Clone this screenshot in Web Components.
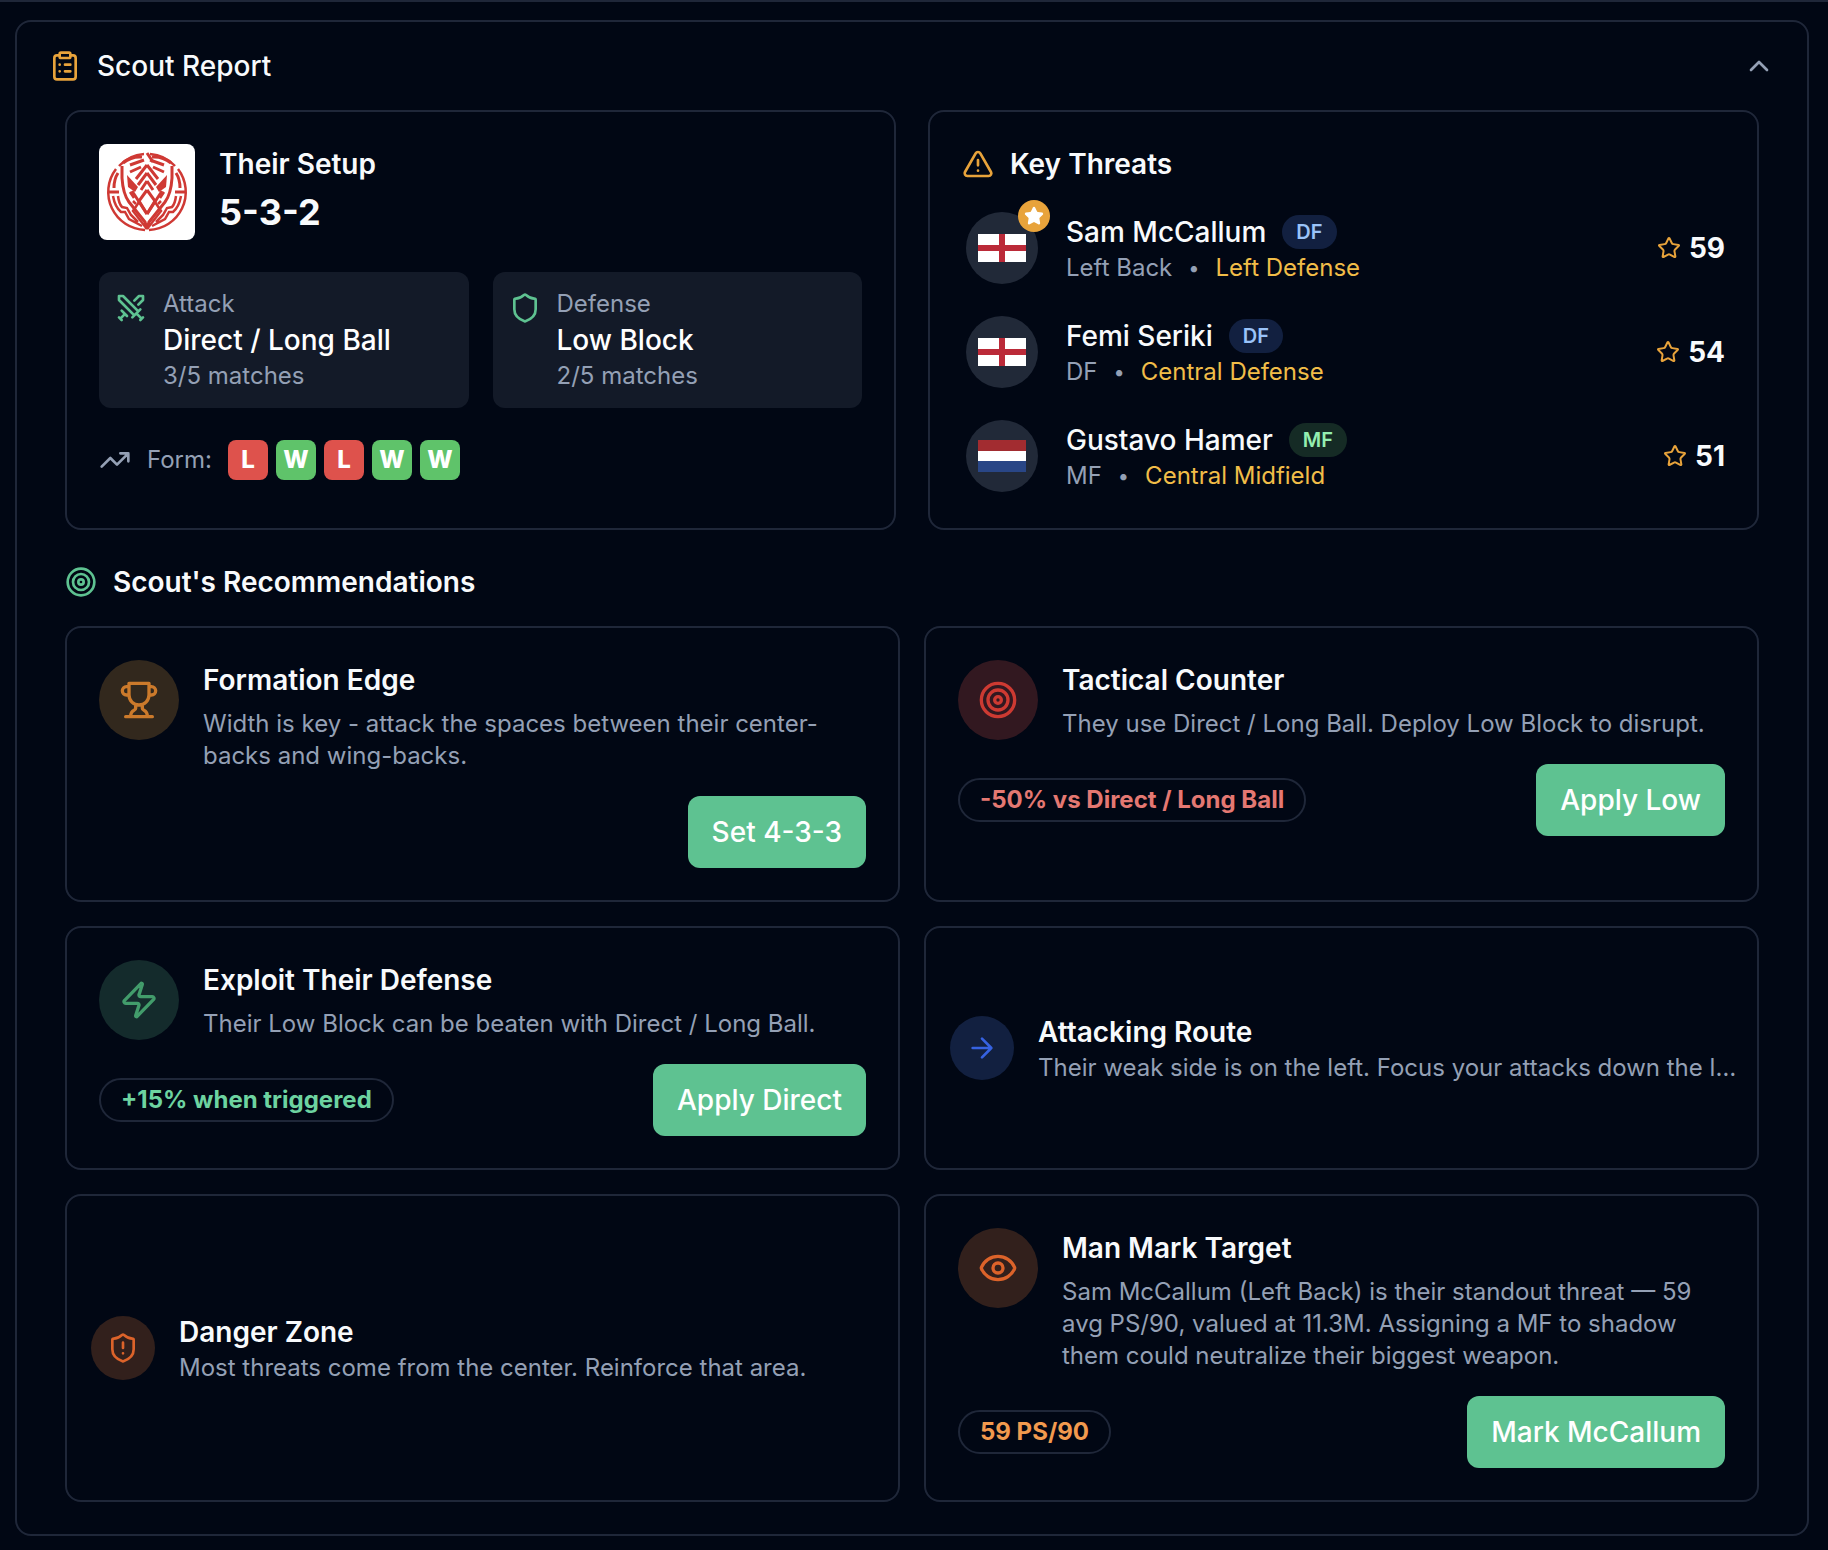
<!DOCTYPE html>
<html lang="en">
<head>
<meta charset="utf-8">
<meta name="viewport" content="width=device-width, initial-scale=1">
<title>Scout Report</title>
<style>
  :root {
    --bg: #010714;
    --line: #1f2739;
    --panel: #131a28;
    --text: #f8fafc;
    --muted: #94a0b5;
    --green: #5ec291;
    --amber: #e8a33b;
    --yellow: #f1bd48;
  }
  body {
    margin: 0;
    min-height: 100vh;
    box-sizing: border-box;
    border-top: 2px solid var(--line);
    background: var(--bg);
    color: var(--text);
    font-family: Inter, "Liberation Sans", sans-serif;
    font-size: 28px;
    line-height: 40px;
  }
  main {
    padding: 18px 19px 14px 15px;
  }
</style>
</head>
<body>
<main>
  <scout-report heading="Scout Report">
    <card-grid gap="wide">
      <setup-card heading="Their Setup" formation="5-3-2">
        <team-crest slot="crest"></team-crest>
        <style-stat slot="stats" icon="swords" label="Attack" value="Direct / Long Ball" note="3/5 matches"></style-stat>
        <style-stat slot="stats" icon="shield" label="Defense" value="Low Block" note="2/5 matches"></style-stat>
        <form-guide slot="form" results="LWLWW"></form-guide>
      </setup-card>
      <threats-card heading="Key Threats">
        <threat-row name="Sam McCallum" tag="DF" role="Left Back" area="Left Defense" score="59" flag="england" top></threat-row>
        <threat-row name="Femi Seriki" tag="DF" role="DF" area="Central Defense" score="54" flag="england"></threat-row>
        <threat-row name="Gustavo Hamer" tag="MF" role="MF" area="Central Midfield" score="51" flag="netherlands"></threat-row>
      </threats-card>
    </card-grid>

    <section-title icon="target">Scout's Recommendations</section-title>

    <card-grid>
      <rec-card icon="trophy" tone="amber" heading="Formation Edge" action="Set 4-3-3">Width is key - attack the spaces between their center-backs and wing-backs.</rec-card>
      <rec-card icon="target" tone="red" heading="Tactical Counter" effect="-50% vs Direct / Long Ball" action="Apply Low">They use Direct / Long Ball. Deploy Low Block to disrupt.</rec-card>
      <rec-card icon="zap" tone="green" heading="Exploit Their Defense" effect="+15% when triggered" action="Apply Direct">Their Low Block can be beaten with Direct / Long Ball.</rec-card>
      <tip-card icon="arrow" tone="blue" heading="Attacking Route">Their weak side is on the left. Focus your attacks down the left flank.</tip-card>
      <tip-card icon="shieldAlert" tone="orange" heading="Danger Zone">Most threats come from the center. Reinforce that area.</tip-card>
      <rec-card icon="eye" tone="orange" heading="Man Mark Target" effect="59 PS/90" action="Mark McCallum">Sam McCallum (Left Back) is their standout threat — 59 avg PS/90, valued at 11.3M. Assigning a MF to shadow them could neutralize their biggest weapon.</rec-card>
    </card-grid>
  </scout-report>
</main>

<script>
const ICONS = {
  clipboard: '<rect width="8" height="4" x="8" y="2" rx="1"/><path d="M16 4h2a2 2 0 0 1 2 2v14a2 2 0 0 1-2 2H6a2 2 0 0 1-2-2V6a2 2 0 0 1 2-2h2M12 11h4M12 16h4M8 11h.01M8 16h.01"/>',
  chevron: '<path d="m18 15-6-6-6 6"/>',
  swords: '<path d="M14.5 17.5 3 6V3h3l11.5 11.5M13 19l6-6M16 16l4 4M19 21l2-2M14.5 6.5 18 3h3v3l-3.5 3.5M5 14l4 4M7 17l-3 3M3 19l2 2"/>',
  shield: '<path d="M20 13c0 5-3.5 7.5-7.66 8.95a1 1 0 0 1-.67-.01C7.5 20.5 4 18 4 13V6a1 1 0 0 1 1-1c2 0 4.5-1.2 6.24-2.72a1.17 1.17 0 0 1 1.52 0C14.51 3.81 17 5 19 5a1 1 0 0 1 1 1z"/>',
  shieldAlert: '<path d="M20 13c0 5-3.5 7.5-7.66 8.95a1 1 0 0 1-.67-.01C7.5 20.5 4 18 4 13V6a1 1 0 0 1 1-1c2 0 4.5-1.2 6.24-2.72a1.17 1.17 0 0 1 1.52 0C14.51 3.81 17 5 19 5a1 1 0 0 1 1 1zM12 8v4M12 16h.01"/>',
  trend: '<path d="m22 7-8.5 8.5-5-5L2 17M16 7h6v6"/>',
  alert: '<path d="m21.73 18-8-14a2 2 0 0 0-3.48 0l-8 14A2 2 0 0 0 4 21h16a2 2 0 0 0 1.73-3M12 9v4M12 17h.01"/>',
  star: '<path d="M11.525 2.295a.53.53 0 0 1 .95 0l2.31 4.679a2.123 2.123 0 0 0 1.595 1.16l5.166.756a.53.53 0 0 1 .294.904l-3.736 3.638a2.123 2.123 0 0 0-.611 1.878l.882 5.14a.53.53 0 0 1-.771.56l-4.618-2.428a2.122 2.122 0 0 0-1.973 0L6.396 21.01a.53.53 0 0 1-.77-.56l.881-5.139a2.122 2.122 0 0 0-.611-1.879L2.16 9.795a.53.53 0 0 1 .294-.906l5.165-.755a2.122 2.122 0 0 0 1.597-1.16z"/>',
  target: '<circle cx="12" cy="12" r="10"/><circle cx="12" cy="12" r="6"/><circle cx="12" cy="12" r="2"/>',
  trophy: '<path d="M6 9H4.500a2.500 2.500 0 0 1 0-5H6M18 9h1.500a2.500 2.500 0 0 0 0-5H18M4 22h16M10 14.660V17c0 .55-.47.98-.97 1.210C7.850 18.750 7 20.240 7 22M14 14.660V17c0 .55.47.98.97 1.210C16.150 18.750 17 20.240 17 22M18 2H6v7a6 6 0 0 0 12 0z"/>',
  zap: '<path d="M4 14a1 1 0 0 1-.78-1.630l9.900-10.200a.5.5 0 0 1 .86.46l-1.920 6.020A1 1 0 0 0 13 10h7a1 1 0 0 1 .78 1.630l-9.900 10.200a.5.5 0 0 1-.86-.46l1.920-6.020A1 1 0 0 0 11 14z"/>',
  arrow: '<path d="M5 12h14M12 5l7 7-7 7"/>',
  eye: '<path d="M2.062 12.348a1 1 0 0 1 0-.696 10.750 10.750 0 0 1 19.876 0 1 1 0 0 1 0 .696 10.750 10.750 0 0 1-19.876 0"/><circle cx="12" cy="12" r="3"/>'
};

const FLAGS = {
  england: '<svg width="48" height="28" viewBox="0 0 48 28" role="img" aria-label="England"><path fill="#fff" d="M0 0h48v28H0z"/><path fill="#bb2a38" d="M21 0h6v28h-6zM0 11h48v6H0z"/></svg>',
  netherlands: '<svg width="48" height="32" viewBox="0 0 48 32" role="img" aria-label="Netherlands"><path fill="#fff" d="M0 0h48v32H0z"/><path fill="#a22c30" d="M0 0h48v11H0z"/><path fill="#294686" d="M0 21h48v11H0z"/></svg>'
};

const TONES = {
  amber: { disc: '#32281d', icon: '#cc7a2b', label: '#f1bd48' },
  red: { disc: '#321820', icon: '#cd3a32', label: '#e47872' },
  green: { disc: '#142b2c', icon: '#429c6b', label: '#6dd3a0' },
  blue: { disc: '#122040', icon: '#3662e0', label: '#9ac3f9' },
  orange: { disc: '#32201c', icon: '#dc632a', label: '#f29a4e' }
};

const CARD = `
  :host {
    display: block;
    box-sizing: border-box;
    min-width: 0;
    border: 2px solid var(--line);
    border-radius: 16px;
  }
  h3, p { margin: 0; }
  h3 { font-size: 28px; line-height: 40px; font-weight: 600; }
  p { font-size: 24px; line-height: 32px; color: var(--muted); }
`;

// Small base class: subclasses only return their markup
class BaseElement extends HTMLElement {
  constructor() {
    super();
    this.attachShadow({ mode: 'open' });
  }

  connectedCallback() {
    this.shadowRoot.innerHTML = this.template();
  }

  attr(name) {
    return this.getAttribute(name) || '';
  }
}

class UiIcon extends BaseElement {
  template() {
    const size = this.attr('size') || 32;
    const fill = this.hasAttribute('filled') ? 'currentColor' : 'none';
    return `
      <style>
        :host { display: block; flex: none; width: ${size}px; height: ${size}px; }
        svg { display: block; }
      </style>
      <svg width="${size}" height="${size}" viewBox="0 0 24 24" fill="${fill}" stroke="currentColor"
        stroke-width="2" stroke-linecap="round" stroke-linejoin="round" aria-hidden="true">${ICONS[this.attr('name')]}</svg>
    `;
  }
}

class ScoutReport extends BaseElement {
  template() {
    return `
      <style>
        :host {
          display: block;
          border: 2px solid var(--line);
          border-radius: 16px;
        }
        h2 { margin: 0; }
        button {
          display: flex;
          align-items: center;
          gap: 16px;
          width: 100%;
          padding: 24px 32px;
          border: 0;
          background: none;
          color: var(--text);
          font: inherit;
          font-size: 28px;
          line-height: 40px;
          font-weight: 500;
          text-align: left;
          cursor: pointer;
        }
        .label { flex: 1; }
        .lead { color: var(--amber); }
        .toggle { color: var(--muted); }
        .closed .toggle { transform: rotate(180deg); }
        .body {
          display: flex;
          flex-direction: column;
          padding: 0 48px 32px;
        }
        .body[hidden] { display: none; }
      </style>
      <h2>
        <button type="button" aria-expanded="true">
          <ui-icon class="lead" name="clipboard"></ui-icon>
          <span class="label">${this.attr('heading')}</span>
          <ui-icon class="toggle" name="chevron"></ui-icon>
        </button>
      </h2>
      <div class="body"><slot></slot></div>
    `;
  }

  connectedCallback() {
    super.connectedCallback();
    const button = this.shadowRoot.querySelector('button');
    const body = this.shadowRoot.querySelector('.body');
    button.addEventListener('click', () => {
      body.hidden = !body.hidden;
      button.classList.toggle('closed', body.hidden);
      button.setAttribute('aria-expanded', String(!body.hidden));
    });
  }
}

class CardGrid extends BaseElement {
  template() {
    return `
      <style>
        :host {
          display: grid;
          grid-template-columns: repeat(2, minmax(0, 1fr));
          gap: ${this.attr('gap') === 'wide' ? 32 : 24}px;
        }
        @media (max-width: 1100px) {
          :host { grid-template-columns: minmax(0, 1fr); }
        }
      </style>
      <slot></slot>
    `;
  }
}

class SectionTitle extends BaseElement {
  template() {
    return `
      <style>
        :host { display: block; padding: 32px 0 24px; }
        h3 {
          display: flex;
          align-items: center;
          gap: 16px;
          margin: 0;
          font-size: 28px;
          line-height: 40px;
          font-weight: 600;
        }
        ui-icon { color: var(--green); }
      </style>
      <h3><ui-icon name="${this.attr('icon')}"></ui-icon><span><slot></slot></span></h3>
    `;
  }
}

class TeamCrest extends BaseElement {
  template() {
    // left half of the emblem, mirrored for the right one
    const half = `
      <path d="M45 10A38 38 0 0 0 20 22M17 25A38 38 0 0 0 46 86"/>
      <path d="M9 48h11M15 44Q15 35 19 29" stroke-width="3"/>
      <path d="M14 52Q16 63 22 68L26 68L30 75L43 82M19 52Q20 60 23 63L28 64L32 71L39 78"/>
      <path d="M23 22V34Q24 50 30 58L46 78L48 85" stroke-width="3"/>
      <path d="M33 47L48 70" stroke-width="3"/>
      <path d="M40 58L34 67L48 85"/>
      <path d="M24 19Q33 12 43 13M31 21L45 16" stroke-width="3"/>
      <path d="M31 28L42 23M37 35L48 21M39 41L48 29M42 46L48 37" stroke-width="3"/>
      <path d="M48 46L40 57L48 70" stroke-width="3"/>
      <path d="M28 31L39 43L36 48L29 43z" fill="#cf3934" stroke="none"/>
      <path d="M31 48L35 54M34 57L37 60"/>
    `;
    return `
      <style>
        :host { display: block; flex: none; width: 96px; height: 96px; }
        svg { display: block; }
      </style>
      <svg width="96" height="96" viewBox="0 0 96 96" role="img" aria-label="Team crest">
        <rect width="96" height="96" rx="8" fill="#fff"/>
        <g fill="none" stroke="#cf3934" stroke-width="2.500">
          <g>${half}</g>
          <g transform="matrix(-1 0 0 1 96 0)">${half}</g>
          <path d="M48 9L54 18" stroke-width="3"/>
        </g>
      </svg>
    `;
  }
}

class SetupCard extends BaseElement {
  template() {
    return `
      <style>
        ${CARD}
        :host { padding: 32px; }
        header { display: flex; gap: 24px; }
        .formation {
          color: var(--text);
          font-size: 36px;
          line-height: 56px;
          font-weight: 700;
        }
        .stats {
          display: grid;
          grid-template-columns: repeat(2, minmax(0, 1fr));
          gap: 24px;
          margin: 32px 0;
        }
      </style>
      <header>
        <slot name="crest"></slot>
        <div>
          <h3>${this.attr('heading')}</h3>
          <p class="formation">${this.attr('formation')}</p>
        </div>
      </header>
      <div class="stats"><slot name="stats"></slot></div>
      <slot name="form"></slot>
    `;
  }
}

class StyleStat extends BaseElement {
  template() {
    return `
      <style>
        :host {
          display: flex;
          gap: 16px;
          padding: 16px;
          border-radius: 12px;
          background: var(--panel);
          color: var(--muted);
          font-size: 24px;
          line-height: 32px;
        }
        ui-icon { margin-top: 4px; color: var(--green); }
        .value {
          color: #fff;
          font-size: 28px;
          line-height: 40px;
          font-weight: 500;
        }
      </style>
      <ui-icon name="${this.attr('icon')}"></ui-icon>
      <div>
        <div>${this.attr('label')}</div>
        <div class="value">${this.attr('value')}</div>
        <div>${this.attr('note')}</div>
      </div>
    `;
  }
}

class FormGuide extends BaseElement {
  template() {
    return `
      <style>
        :host {
          display: flex;
          align-items: center;
          gap: 16px;
          color: var(--muted);
          font-size: 24px;
          line-height: 32px;
        }
        .results { display: flex; gap: 8px; }
        .results span {
          display: grid;
          place-content: center;
          width: 40px;
          height: 40px;
          border-radius: 8px;
          color: #fff;
          font-weight: 800;
        }
        .W { background: #5fc36a; }
        .L { background: #de524c; }
      </style>
      <ui-icon name="trend"></ui-icon>
      <span>Form:</span>
      <div class="results">
        ${[...this.attr('results')].map(result => `<span class="${result}">${result}</span>`).join('')}
      </div>
    `;
  }
}

class ThreatsCard extends BaseElement {
  template() {
    return `
      <style>
        ${CARD}
        :host { padding: 32px; }
        h3 { display: flex; align-items: center; gap: 16px; }
        ui-icon { color: var(--amber); }
        .rows {
          display: flex;
          flex-direction: column;
          gap: 24px;
          margin-top: 24px;
        }
      </style>
      <h3><ui-icon name="alert"></ui-icon>${this.attr('heading')}</h3>
      <div class="rows"><slot></slot></div>
    `;
  }
}

class ThreatRow extends BaseElement {
  template() {
    const badge = this.hasAttribute('top')
      ? '<span class="badge"><ui-icon name="star" size="20" filled></ui-icon></span>'
      : '';
    return `
      <style>
        :host { display: flex; align-items: center; gap: 24px; }
        .avatar { position: relative; padding: 4px; }
        .disc {
          display: grid;
          place-content: center;
          width: 72px;
          height: 72px;
          border-radius: 50%;
          background: #212938;
        }
        .disc svg { display: block; }
        .badge {
          position: absolute;
          top: -8px;
          right: -8px;
          display: grid;
          place-content: center;
          width: 32px;
          height: 32px;
          border-radius: 50%;
          background: var(--amber);
          color: #fff;
        }
        .info { flex: 1; min-width: 0; }
        .name, .role { display: flex; align-items: center; gap: 16px; }
        .name { font-size: 28px; line-height: 40px; font-weight: 500; }
        .role { font-size: 24px; line-height: 32px; color: var(--muted); }
        .dot { font-size: 20px; }
        .area { color: var(--yellow); }
        .tag {
          padding: 2px 14px;
          border-radius: 20px;
          font-size: 20px;
          line-height: 30px;
          font-weight: 600;
        }
        .DF { background: #122040; color: #9ac3f9; }
        .MF { background: #152b25; color: #94efb0; }
        .score { display: flex; align-items: center; gap: 8px; font-weight: 700; }
        .score ui-icon { color: var(--amber); }
      </style>
      <div class="avatar"><div class="disc">${FLAGS[this.attr('flag')]}</div>${badge}</div>
      <div class="info">
        <div class="name"><span>${this.attr('name')}</span><span class="tag ${this.attr('tag')}">${this.attr('tag')}</span></div>
        <div class="role"><span>${this.attr('role')}</span><span class="dot">•</span><span class="area">${this.attr('area')}</span></div>
      </div>
      <div class="score"><ui-icon name="star" size="24"></ui-icon>${this.attr('score')}</div>
    `;
  }
}

class RecCard extends BaseElement {
  template() {
    const tone = TONES[this.attr('tone')];
    const effect = this.attr('effect');
    return `
      <style>
        ${CARD}
        :host { padding: 32px; }
        .top { display: flex; gap: 24px; }
        .disc {
          display: grid;
          place-content: center;
          flex: none;
          width: 80px;
          height: 80px;
          border-radius: 50%;
          background: ${tone.disc};
          color: ${tone.icon};
        }
        p { margin-top: 8px; }
        .actions {
          display: flex;
          align-items: center;
          margin-top: 24px;
        }
        .effect {
          padding: 4px 20px;
          border: 2px solid var(--line);
          border-radius: 22px;
          color: ${tone.label};
          font-size: 24px;
          line-height: 32px;
          font-weight: 700;
        }
        button {
          margin-left: auto;
          padding: 16px 24px;
          border: 0;
          border-radius: 12px;
          background: var(--green);
          color: #fff;
          font: inherit;
          font-size: 28px;
          line-height: 40px;
          font-weight: 500;
          cursor: pointer;
        }
      </style>
      <div class="top">
        <div class="disc"><ui-icon name="${this.attr('icon')}" size="40"></ui-icon></div>
        <div>
          <h3>${this.attr('heading')}</h3>
          <p><slot></slot></p>
        </div>
      </div>
      <div class="actions">
        ${effect ? `<span class="effect">${effect}</span>` : ''}
        <button type="button">${this.attr('action')}</button>
      </div>
    `;
  }
}

class TipCard extends BaseElement {
  template() {
    const tone = TONES[this.attr('tone')];
    return `
      <style>
        ${CARD}
        :host { display: flex; align-items: center; gap: 24px; padding: 24px 20px 24px 24px; }
        .disc {
          display: grid;
          place-content: center;
          flex: none;
          width: 64px;
          height: 64px;
          border-radius: 50%;
          background: ${tone.disc};
          color: ${tone.icon};
        }
        .copy { flex: 1; min-width: 0; }
        p { overflow: hidden; white-space: nowrap; text-overflow: ellipsis; }
      </style>
      <div class="disc"><ui-icon name="${this.attr('icon')}"></ui-icon></div>
      <div class="copy">
        <h3>${this.attr('heading')}</h3>
        <p><slot></slot></p>
      </div>
    `;
  }
}

customElements.define('ui-icon', UiIcon);
customElements.define('scout-report', ScoutReport);
customElements.define('card-grid', CardGrid);
customElements.define('section-title', SectionTitle);
customElements.define('team-crest', TeamCrest);
customElements.define('setup-card', SetupCard);
customElements.define('style-stat', StyleStat);
customElements.define('form-guide', FormGuide);
customElements.define('threats-card', ThreatsCard);
customElements.define('threat-row', ThreatRow);
customElements.define('rec-card', RecCard);
customElements.define('tip-card', TipCard);
</script>
</body>
</html>
